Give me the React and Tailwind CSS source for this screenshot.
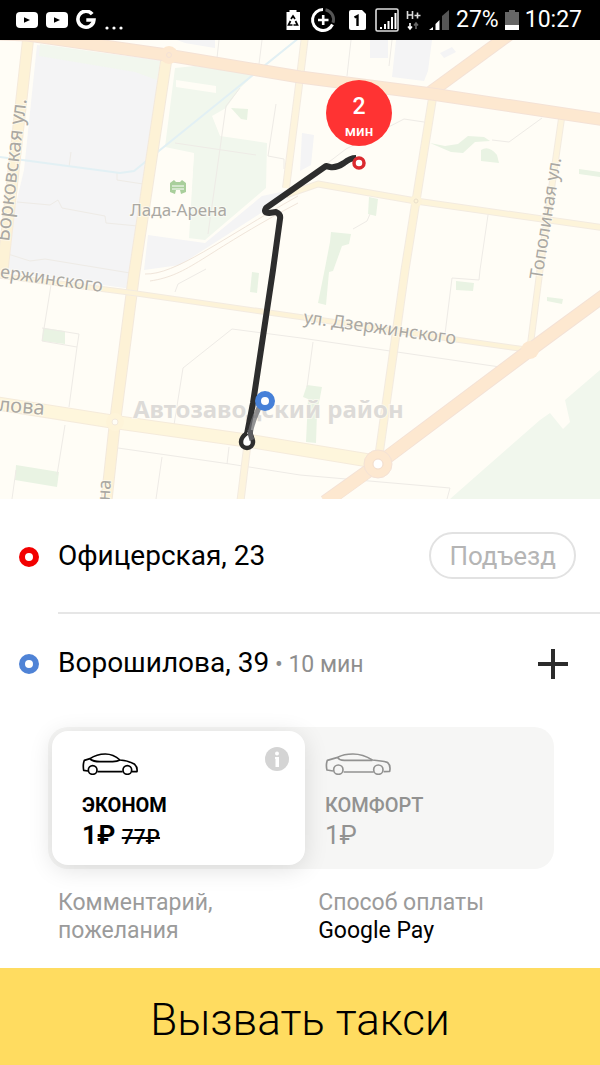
import React, { useState } from "react";

const STREET = "'Noto Sans', 'Open Sans', sans-serif";

const YouTubeIcon = () => (
  <svg viewBox="0 0 22 16" className="h-4 w-[22px]" aria-hidden="true">
    <rect width="22" height="16" rx="4" fill="#fff" />
    <path d="M8 5.2 14 8l-6 2.8z" fill="#000" />
  </svg>
);

const StatusBar = () => (
  <header className="flex h-10 items-center justify-between bg-black pl-4 pr-[18px] text-white">
    <div className="flex items-center gap-2">
      <YouTubeIcon />
      <YouTubeIcon />
      <svg viewBox="0 0 20 20" className="h-5 w-5" aria-hidden="true">
        <path d="M16.2 4.2A8 8 0 1 0 17.9 10H10.3" fill="none" stroke="#fff" strokeWidth="3.6" />
      </svg>
      <svg viewBox="0 0 20 20" className="h-5 w-5" aria-hidden="true">
        <circle cx="3" cy="18" r="1.6" fill="#fff" />
        <circle cx="10" cy="18" r="1.6" fill="#fff" />
        <circle cx="17" cy="18" r="1.6" fill="#fff" />
      </svg>
    </div>
    <div className="flex items-center gap-1.5 text-[23px] leading-8">
      <svg viewBox="286 8 164 26" className="h-[26px] w-[164px]" aria-hidden="true">
        {/* battery with recycle arrows */}
        <path d="M286.5 13h3v-2h7v2h3.500v18h-13.500z" fill="#fff" />
        <path d="m291 20 2-3 2 3M290.5 22l-2 4h4M295.5 22l2 4h-4" fill="none" stroke="#000" strokeWidth="1.7" />
        {/* data saver */}
        <path d="M323 10.5a10.5 10.5 0 1 0 9.500 15" fill="none" stroke="#fff" strokeWidth="3" />
        <path d="M325.5 10.8a10 10 0 0 1 7.500 13" fill="none" stroke="#555" strokeWidth="3" />
        <path d="M318 21h10.5M323.2 16v10" stroke="#fff" strokeWidth="2.6" />
        {/* sim card */}
        <path d="M349 13q0-2 2-2h11l4 4v14q0 2-2 2h-13q-2 0-2-2z" fill="#fff" />
        <path d="M354.5 18.5 357.5 17v10" fill="none" stroke="#000" strokeWidth="2.4" />
        {/* first signal */}
        <rect x="376" y="10" width="22" height="22" rx="1.5" fill="none" stroke="#ddd" strokeWidth="1.6" />
        <path d="M381 30v-2M385 30v-5M388.5 30v-8M392 30v-12M395.5 30v-16" stroke="#fff" strokeWidth="2" />
        {/* H+ */}
        <path d="M407.5 12v8M412.5 12v8M407.5 16h5M414.5 16.5h6M417.5 13.5v6" stroke="#ddd" strokeWidth="1.6" />
        <path d="M410 24v6m-2-2.5 2 2.5 2-2.5" fill="none" stroke="#fff" strokeWidth="1.6" />
        <path d="M416 30v-6m-2 2.500 2-2.500 2 2.500" fill="none" stroke="#666" strokeWidth="1.6" />
        {/* second signal */}
        <path d="M442 31V17l7-6v20z" fill="#555" />
        <path d="M429 31l4-3v3zM435.5 31v-6l4-4v10z" fill="#fff" />
      </svg>
      <span>27%</span>
      <svg viewBox="0 0 14 20" className="h-5 w-[14px]" aria-hidden="true">
        <path d="M0 2h4V0h6v2h4v18H0z" fill="#666" />
        <path d="M0 15h14v5H0z" fill="#fff" />
      </svg>
      <span>10:27</span>
    </div>
  </header>
);

// [path, fill, edge, width]
const roads = [
  ["M28 40 L2 275", "#fdf2d6", "#f5eadb", 10],
  ["M167 55 L134 275 L115 422 L106 505", "#fdf2d6", "#f3e9dc", 10],
  ["M305 36 L300 77 L286 188", "#fdf4dd", "#f3ebe0", 6],
  ["M286 195 L318 184 L416 201 L605 228", "#fdf4da", "#f3ebe0", 5],
  ["M433 95 L416 201 L405 270 L378 462", "#fdf3d8", "#f3ebe0", 7],
  ["M562 115 L541 262 L530 348", "#fdf4dd", "#f3ebe0", 5],
  ["M-5 275 L133 293 L300 317 L480 343 L530 350", "#fdf3d8", "#f3ebe0", 4],
  ["M-5 403 L115 422 L250 441 L378 462", "#fef6dc", "#f5ebdb", 12],
  ["M247 448 L240 505", "#fdf4dd", "#f3ebe0", 6],
  ["M428 94 L510 34", "#fde8d0", "#f4e2d6", 11],
  ["M0 34 L28 35 L167 55 L300 77 L432 94 L605 120", "#fde8d0", "#f4e2d6", 11],
  ["M605 295 L530 350 L378 464 L325 502", "#fde8d0", "#f4e2d6", 12],
];

const CityMap = () => (
  <svg viewBox="0 40 600 459" className="block w-full" role="img" aria-label="Карта">
    <rect y="40" width="600" height="459" fill="#fffdf6" />

    {/* blocks */}
    <g fill="#f4f4f5">
      <path d="M37 45 L160 60 L132 289 L0 271 L24 170z" />
      <path d="M177 40h38v8l-30-5zM370 40h18v18h-18zM396 40h36l-4 31-4 10-32-4zM440 53l12-6 4 5-12 6z" />
      <path d="M148 235 L205 243 L262 196 L290 190 L272 206 L180 265 L144 270z" />
      <path d="M302 133l12 2-3 30-11 6z" />
    </g>
    <path d="M40 44 L160 61 L157 80 L135 72 L39 56z" fill="#f2f7ee" />
    <g fill="#f1f7ed">
      <path d="M175 68 L195 66 L255 74 L240 88 L226 108 L212 116 L220 136 L267 143 L266 188 L205 240 L188 238 L194 153 L165 147z" />
      <path d="M600 370 L565 400 L570 422 L563 429 L550 413 L540 420 L450 499 H600z" />
    </g>
    <path d="M176 80l40 6v7l-40-6zM160 151l34 2-5 86-40-5z" fill="#fffdf6" />
    <g fill="#e9f3e3">
      <path d="M231 108l17 1-1 11-6-1z" />
      <path d="M430 143l15 3 13-2 10-8 16 1 6 4-15 1-12 11-12-1z" />
      <path d="M481 150q8-5 16 5l2 8-18-2z" />
      <path d="M579 169l21 3v5l-21-3z" />
      <path d="M369 197l9 2-2 17-8-2z" />
      <path d="M331 232l20 2-2 10-7 2-9 25-4 1-3 33-8-2 7-35 5-26z" />
      <path d="M252 272l7 1-2 20-7-1z" />
      <path d="M43 328l22 3v13l-23-3z" />
      <path d="M16 465l43 7-2 15-42-7z" />
      <path d="M307 385l15 2-5 26-1 30-10-1 2-43-5-2z" />
      <path d="M456 281l18 2-1 8-17-1z" />
      <path d="M547 297l16 2-1 5-15-3z" />
    </g>

    {/* minor lines */}
    <g fill="none" stroke="#eeebe6">
      <path d="M17 202 L50 205 L58 200 L62 208 L105 216 L106 223 L138 226" />
      <path d="M8 254 L30 261 L45 259 L130 273M117 173l0 7 26 4M71 152l-2 15" />
      <path d="M175 143 L256 155M240 88 L226 106 L208 234M276 104l-8 52 16 3v10" />
      <path d="M145 274 C175 275 220 240 298 196M150 281 C190 275 200 255 298 203" stroke="#f0e5da" />
      <path d="M175 292l3-8 28-15" />
      <path d="M219 40l-2 18M262 40l-3 24M351 40l-4 36M392 40l-3 26" />
      <path d="M424 122 L404 119 L346 149 L325 165M542 118 L509 142 L492 140M488 215l-8 55-1 10-27-2-7 56" />
      <path d="M370 214l-3 7-14 8M51 285l-9 56 35 6-8 60M42 328l37 6-2 13M65 425l-8 50M16 470l-4 29" />
      <path d="M301 338 L232 329 L183 368 L174 425M301 338 L500 367M313 342l-6 45" />
      <path d="M118 448 L230 464 L300 475 L450 488 L447 499M162 457l-6 42M229 447l-2 17" />
    </g>
    <path d="M0 157 L120 173 L134 171 L300 37" fill="none" stroke="#e2f0f4" strokeWidth="2" />

    {roads.map(([d, fill, edge, width]) => (
      <g key={d} fill="none" strokeLinejoin="round">
        <path d={d} stroke={edge} strokeWidth={width + 2} />
        <path d={d} stroke={fill} strokeWidth={width} />
      </g>
    ))}
    <circle cx="169" cy="55" r="9" fill="#fde8d0" />
    <circle cx="169" cy="55" r="2.5" fill="none" stroke="#f4e2d6" />
    <circle cx="115" cy="422" r="9" fill="#fef4d9" />
    <circle cx="115" cy="422" r="3" fill="#fffdf6" stroke="#f3e9dc" />
    <circle cx="416" cy="201" r="6" fill="#fdf3d8" />
    <circle cx="416" cy="201" r="2" fill="none" stroke="#eadfca" />
    <circle cx="530" cy="350" r="9" fill="#fde8d0" />
    <circle cx="378" cy="464" r="14" fill="#fde8d0" stroke="#f4e2d6" />
    <path d="M366 473 L330 499M390 455 L410 440" stroke="#fde8d0" strokeWidth="12" />
    <circle cx="378" cy="464" r="5" fill="#fff" stroke="#f2dccc" />

    {/* stadium */}
    <path
      d="M170 183l4-3 2 2h4l2-2 4 3v9l-5 2-1-4h-4l-1 4-5-2z"
      fill="#a9cf9c"
    />
    <path d="M172 186h12M172 189h12" stroke="#fff" />

    {/* labels */}
    <g fill="#aaa8a3" stroke="#fffdf6" strokeOpacity="0.6" strokeWidth="2" paintOrder="stroke" fontFamily={STREET}>
      <text x="130" y="216" fontSize="17">Лада-Арена</text>
      <text transform="translate(9 242) rotate(-83)" fontSize="20">Борковская ул.</text>
      <text transform="translate(542 280) rotate(-81)" fontSize="18">Тополиная ул.</text>
      <text transform="translate(303 323) rotate(8)" fontSize="18">ул. Дзержинского</text>
      <text transform="translate(102 292) rotate(8)" fontSize="18" textAnchor="end">ержинского</text>
      <text transform="translate(44 415) rotate(5)" fontSize="20" textAnchor="end">лова</text>
      <text transform="translate(111 480) rotate(-86)" fontSize="18" textAnchor="end">на</text>
      <text x="133" y="418" fontSize="24" fontWeight="700" fill="#dddbd8">
        Автозаводский район
      </text>
    </g>

    {/* route */}
    <path
      d="M356 158 Q350 158 344 163 Q337 168 330 167 L326 166 L266 208 Q263 213 269 213 L276 212 Q281 214 280 219 L273 270 L253 403 L247 434"
      fill="none"
      stroke="#2d2d2d"
      strokeWidth="6"
      strokeLinejoin="round"
    />
    <path d="M262 403 Q254 415 250 434" fill="none" stroke="#6f6f73" strokeOpacity="0.75" strokeWidth="5" />
    <path d="M247 433 C244 435 241 438 241 442 A6 6 0 0 0 253 442 C253 438 250 435 250 430" fill="#fff" stroke="#2d2d2d" strokeWidth="4.5" />
    <path d="M250 430 Q250 435 252 440" fill="none" stroke="#5c5c60" strokeWidth="5" />
    <circle cx="265" cy="401" r="7" fill="#fff" stroke="#4680d8" strokeWidth="6" />
    <circle cx="359" cy="163" r="5" fill="#fff" stroke="#db2a2f" strokeWidth="3.5" />
    <circle cx="359" cy="113" r="33" fill="#ff3333" />
    <g fill="#fff" textAnchor="middle" fontFamily="Roboto, sans-serif" fontWeight="500">
      <text x="359" y="114" fontSize="23">2</text>
      <text x="359" y="136" fontSize="15">мин</text>
    </g>
  </svg>
);

const Ring = ({ color }) => (
  <svg viewBox="0 0 20 20" className="h-5 w-5 shrink-0" aria-hidden="true">
    <circle cx="10" cy="10" r="7" fill="#fff" stroke={color} strokeWidth="6" />
  </svg>
);

const EconomyCar = () => (
  <svg viewBox="0 0 168 66" className="h-[22px] w-14" fill="none" stroke="currentColor" strokeWidth="5" strokeLinejoin="round" aria-hidden="true">
    <path d="M18 54 L5 52 Q2 34 7 22 L24 17 Q44 3 70 3 Q94 3 114 21 Q140 23 158 34 Q167 42 165 56 L150 56 M46 56 H122" />
    <path d="M24 18 Q34 26 54 26 H92 Q106 25 114 21" />
    <circle cx="32" cy="51" r="13" />
    <circle cx="136" cy="51" r="13" />
  </svg>
);

const ComfortCar = () => (
  <svg viewBox="0 0 198 66" className="h-[22px] w-[66px]" fill="none" stroke="currentColor" strokeWidth="5" strokeLinejoin="round" aria-hidden="true">
    <path d="M24 54 L6 51 Q2 36 7 22 L38 13 Q56 3 84 3 Q114 3 142 21 Q170 23 187 28 Q198 36 194 55 L176 56 M56 57 H146" />
    <path d="M38 13 Q42 22 58 22 H142" />
    <circle cx="40" cy="50" r="14" />
    <circle cx="160" cy="50" r="14" />
  </svg>
);

const InfoIcon = () => (
  <svg viewBox="0 0 24 24" className="h-6 w-6" aria-hidden="true">
    <circle cx="12" cy="12" r="12" fill="#d4d4d4" />
    <circle cx="12" cy="6.5" r="2" fill="#fff" />
    <path d="M10 10h4v10h-3.500v-8h-.5z" fill="#fff" />
  </svg>
);

export default function App() {
  const [tariff, setTariff] = useState("econom");

  return (
    <div className="flex min-h-screen flex-col bg-white font-[Roboto,sans-serif] text-black">
      <StatusBar />
      <CityMap />

      <main className="grow">
        <div className="flex items-center gap-[19px] pl-[19px]">
          <Ring color="#f20000" />
          <div className="flex h-[115px] grow items-center justify-between border-b-2 border-[#e6e6e6] pr-6">
            <span className="text-[28px] leading-8">Офицерская, 23</span>
            <button
              type="button"
              className="h-[47px] rounded-full border-2 border-[#e2e2e2] px-[18px] text-[26px] leading-8 text-[#b5b5b5]"
            >
              Подъезд
            </button>
          </div>
        </div>

        <div className="flex h-[100px] items-center gap-[19px] pl-[19px] pr-8">
          <Ring color="#4f83d6" />
          <p className="grow text-[28px] leading-8">
            Ворошилова, 39
            <span className="text-[23px] text-[#8e8e8e]"> • 10 мин</span>
          </p>
          <button type="button" aria-label="Добавить адрес">
            <svg viewBox="0 0 30 30" className="h-[30px] w-[30px]" aria-hidden="true">
              <path d="M15 0v30M0 15h30" stroke="#2b2b2b" strokeWidth="4" />
            </svg>
          </button>
        </div>

        <div className="ml-12 mr-[46px] mt-[13px] flex rounded-[20px] bg-[#f6f6f5]">
          <div className="relative my-1 ml-1 w-1/2 rounded-2xl bg-white shadow-[0_4px_24px_rgba(0,0,0,0.12)]">
            <button
              type="button"
              aria-pressed={tariff === "econom"}
              onClick={() => setTariff("econom")}
              className="flex w-full flex-col items-start pb-3 pl-[30px] pt-[22px] text-left"
            >
              <EconomyCar />
              <span className="mt-4 text-xl leading-7 font-bold">ЭКОНОМ</span>
              <span className="text-[26px] leading-8 font-bold">
                1₽ <s className="text-[21px] font-medium">77₽</s>
              </span>
            </button>
            <button type="button" aria-label="О тарифе" className="absolute right-4 top-4">
              <InfoIcon />
            </button>
          </div>
          <button
            type="button"
            aria-pressed={tariff === "comfort"}
            onClick={() => setTariff("comfort")}
            className="flex grow flex-col items-start pb-4 pl-5 pt-[26px] text-left text-[#929291]"
          >
            <ComfortCar />
            <span className="mt-4 text-xl leading-7 font-medium">КОМФОРТ</span>
            <span className="text-[26px] leading-8">1₽</span>
          </button>
        </div>

        <div className="flex pb-[23px] pl-[58px] pt-5 text-[23px] leading-7">
          <button type="button" className="w-[48%] text-left text-[#9b9b9b]">
            Комментарий,
            <br />
            пожелания
          </button>
          <button type="button" className="text-left">
            <span className="block text-[#9b9b9b]">Способ оплаты</span>
            Google Pay
          </button>
        </div>
      </main>

      <button type="button" className="h-[99px] w-full bg-[#ffdc60] pt-1 text-[44px] leading-[52px] font-light">
        Вызвать такси
      </button>
    </div>
  );
}
